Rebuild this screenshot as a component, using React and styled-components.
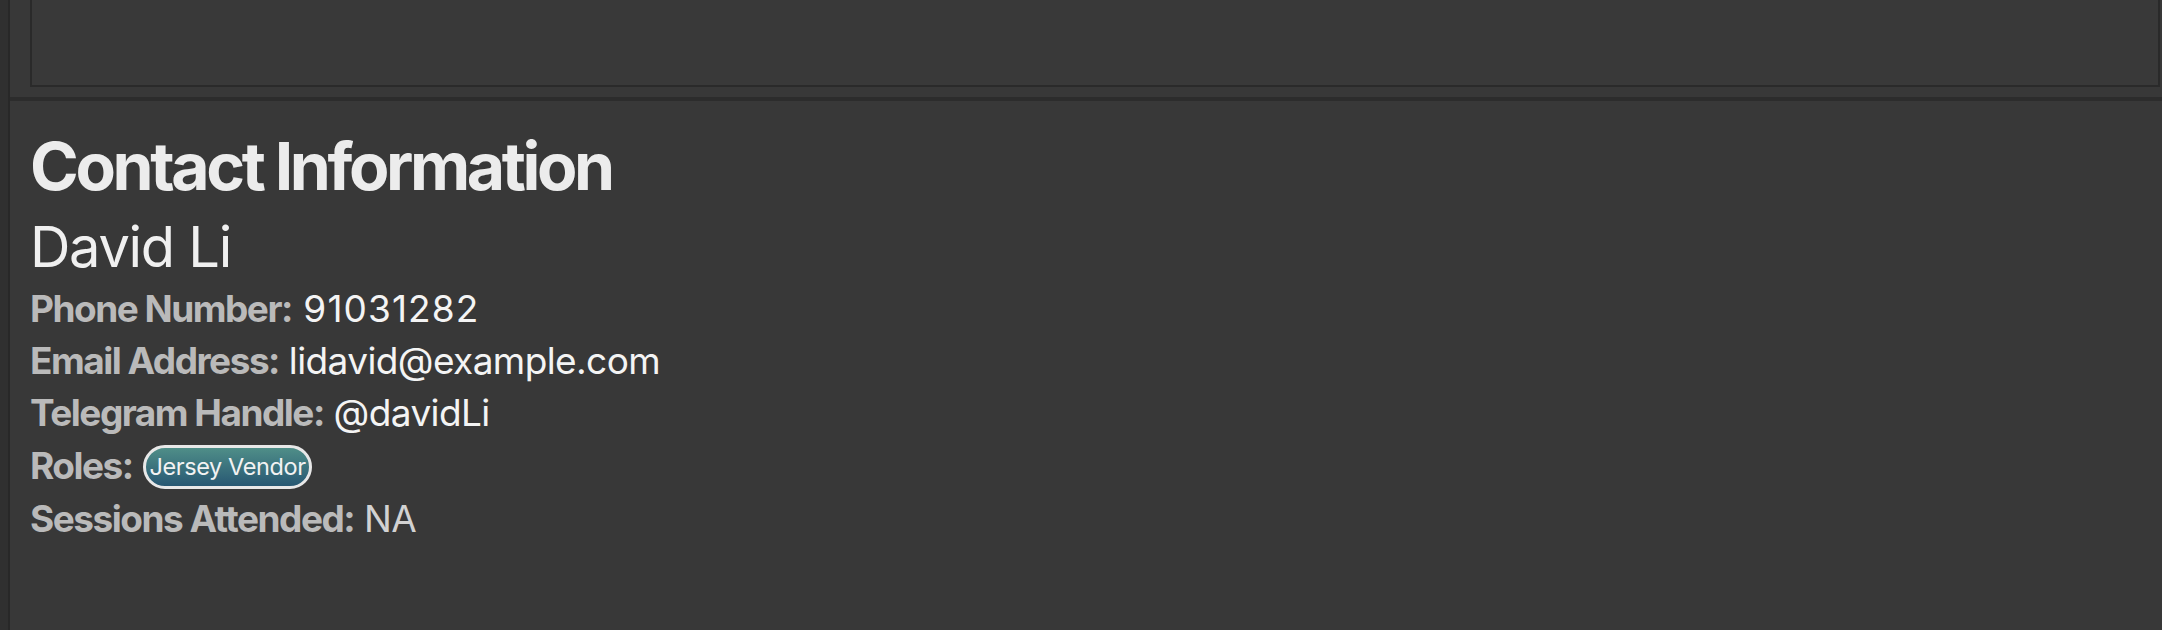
import React from 'react';
import styled, { createGlobalStyle } from 'styled-components';

const GlobalStyle = createGlobalStyle`
  html, body {
    margin: 0;
    padding: 0;
    background: #383838;
  }
  body {
    font-family: Inter, "Noto Sans", sans-serif;
    -webkit-font-smoothing: antialiased;
  }
`;

const Window = styled.div`
  display: flex;
  width: 2162px;
  height: 630px;
  overflow: hidden;
  background: #383838;
`;

const SideStrip = styled.div`
  width: 8px;
  flex: none;
  background: #303030;
  border-right: 2px solid #282828;
`;

const Main = styled.div`
  flex: 1;
  display: flex;
  flex-direction: column;
  min-width: 0;
`;

const TopPane = styled.div`
  padding: 0 2px 10px 20px;
`;

const ListBox = styled.div`
  height: 85px;
  border: 2px solid #2a2a2a;
  border-top: none;
  background: #393939;
`;

const Divider = styled.div`
  height: 4px;
  background: #2c2c2c;
`;

const Details = styled.section`
  display: flex;
  flex-direction: column;
  padding: 32px 20px 0;
`;

const Heading = styled.h1`
  margin: 0;
  font-size: 66px;
  line-height: 66px;
  font-weight: 700;
  letter-spacing: -3.4px;
  color: #ececec;
`;

const Name = styled.div`
  margin-top: 20px;
  font-size: 56px;
  line-height: 56px;
  font-weight: 400;
  letter-spacing: -1.3px;
  color: #f0f0f0;
`;

const Fields = styled.div`
  margin-top: 8px;
  display: flex;
  flex-direction: column;
`;

const Field = styled.div`
  display: flex;
  align-items: center;
  height: ${(p) => (p.$tall ? 54 : 52)}px;
  font-size: 37px;
  line-height: 52px;
  white-space: pre;
`;

const Label = styled.span`
  font-weight: 700;
  letter-spacing: -1.5px;
  color: #bababa;
`;

const Value = styled.span`
  font-weight: 400;
  letter-spacing: ${(p) => (p.$numeric ? '1.1px' : '-0.6px')};
  color: ${(p) => (p.$muted ? '#d2d2d2' : '#f4f4f4')};
`;

const RolePill = styled.span`
  display: inline-flex;
  align-items: center;
  box-sizing: border-box;
  height: 44px;
  margin-top: 2px;
  padding: 0 3px 0 4px;
  border: 3px solid #e8e8e8;
  border-radius: 22px;
  background: linear-gradient(to bottom, #4f8e88, #285873);
  color: #f2f2f2;
  font-size: 23.5px;
  line-height: 1;
  letter-spacing: -0.4px;
`;

const contact = {
  name: 'David Li',
  phone: '91031282',
  email: 'lidavid@example.com',
  telegram: '@davidLi',
  roles: ['Jersey Vendor'],
  sessions: 'NA',
};

export default function App() {
  return (
    <>
      <GlobalStyle />
      <Window>
        <SideStrip />
        <Main>
          <TopPane>
            <ListBox />
          </TopPane>
          <Divider />
          <Details>
            <Heading>Contact Information</Heading>
            <Name>{contact.name}</Name>
            <Fields>
              <Field>
                <Label>Phone Number:</Label>
                <Value $numeric> {contact.phone}</Value>
              </Field>
              <Field>
                <Label>Email Address:</Label>
                <Value> {contact.email}</Value>
              </Field>
              <Field>
                <Label>Telegram Handle:</Label>
                <Value> {contact.telegram}</Value>
              </Field>
              <Field $tall>
                <Label>Roles:</Label>
                <Value> </Value>
                {contact.roles.map((role) => (
                  <RolePill key={role}>{role}</RolePill>
                ))}
              </Field>
              <Field>
                <Label>Sessions Attended:</Label>
                <Value $muted> {contact.sessions}</Value>
              </Field>
            </Fields>
          </Details>
        </Main>
      </Window>
    </>
  );
}
